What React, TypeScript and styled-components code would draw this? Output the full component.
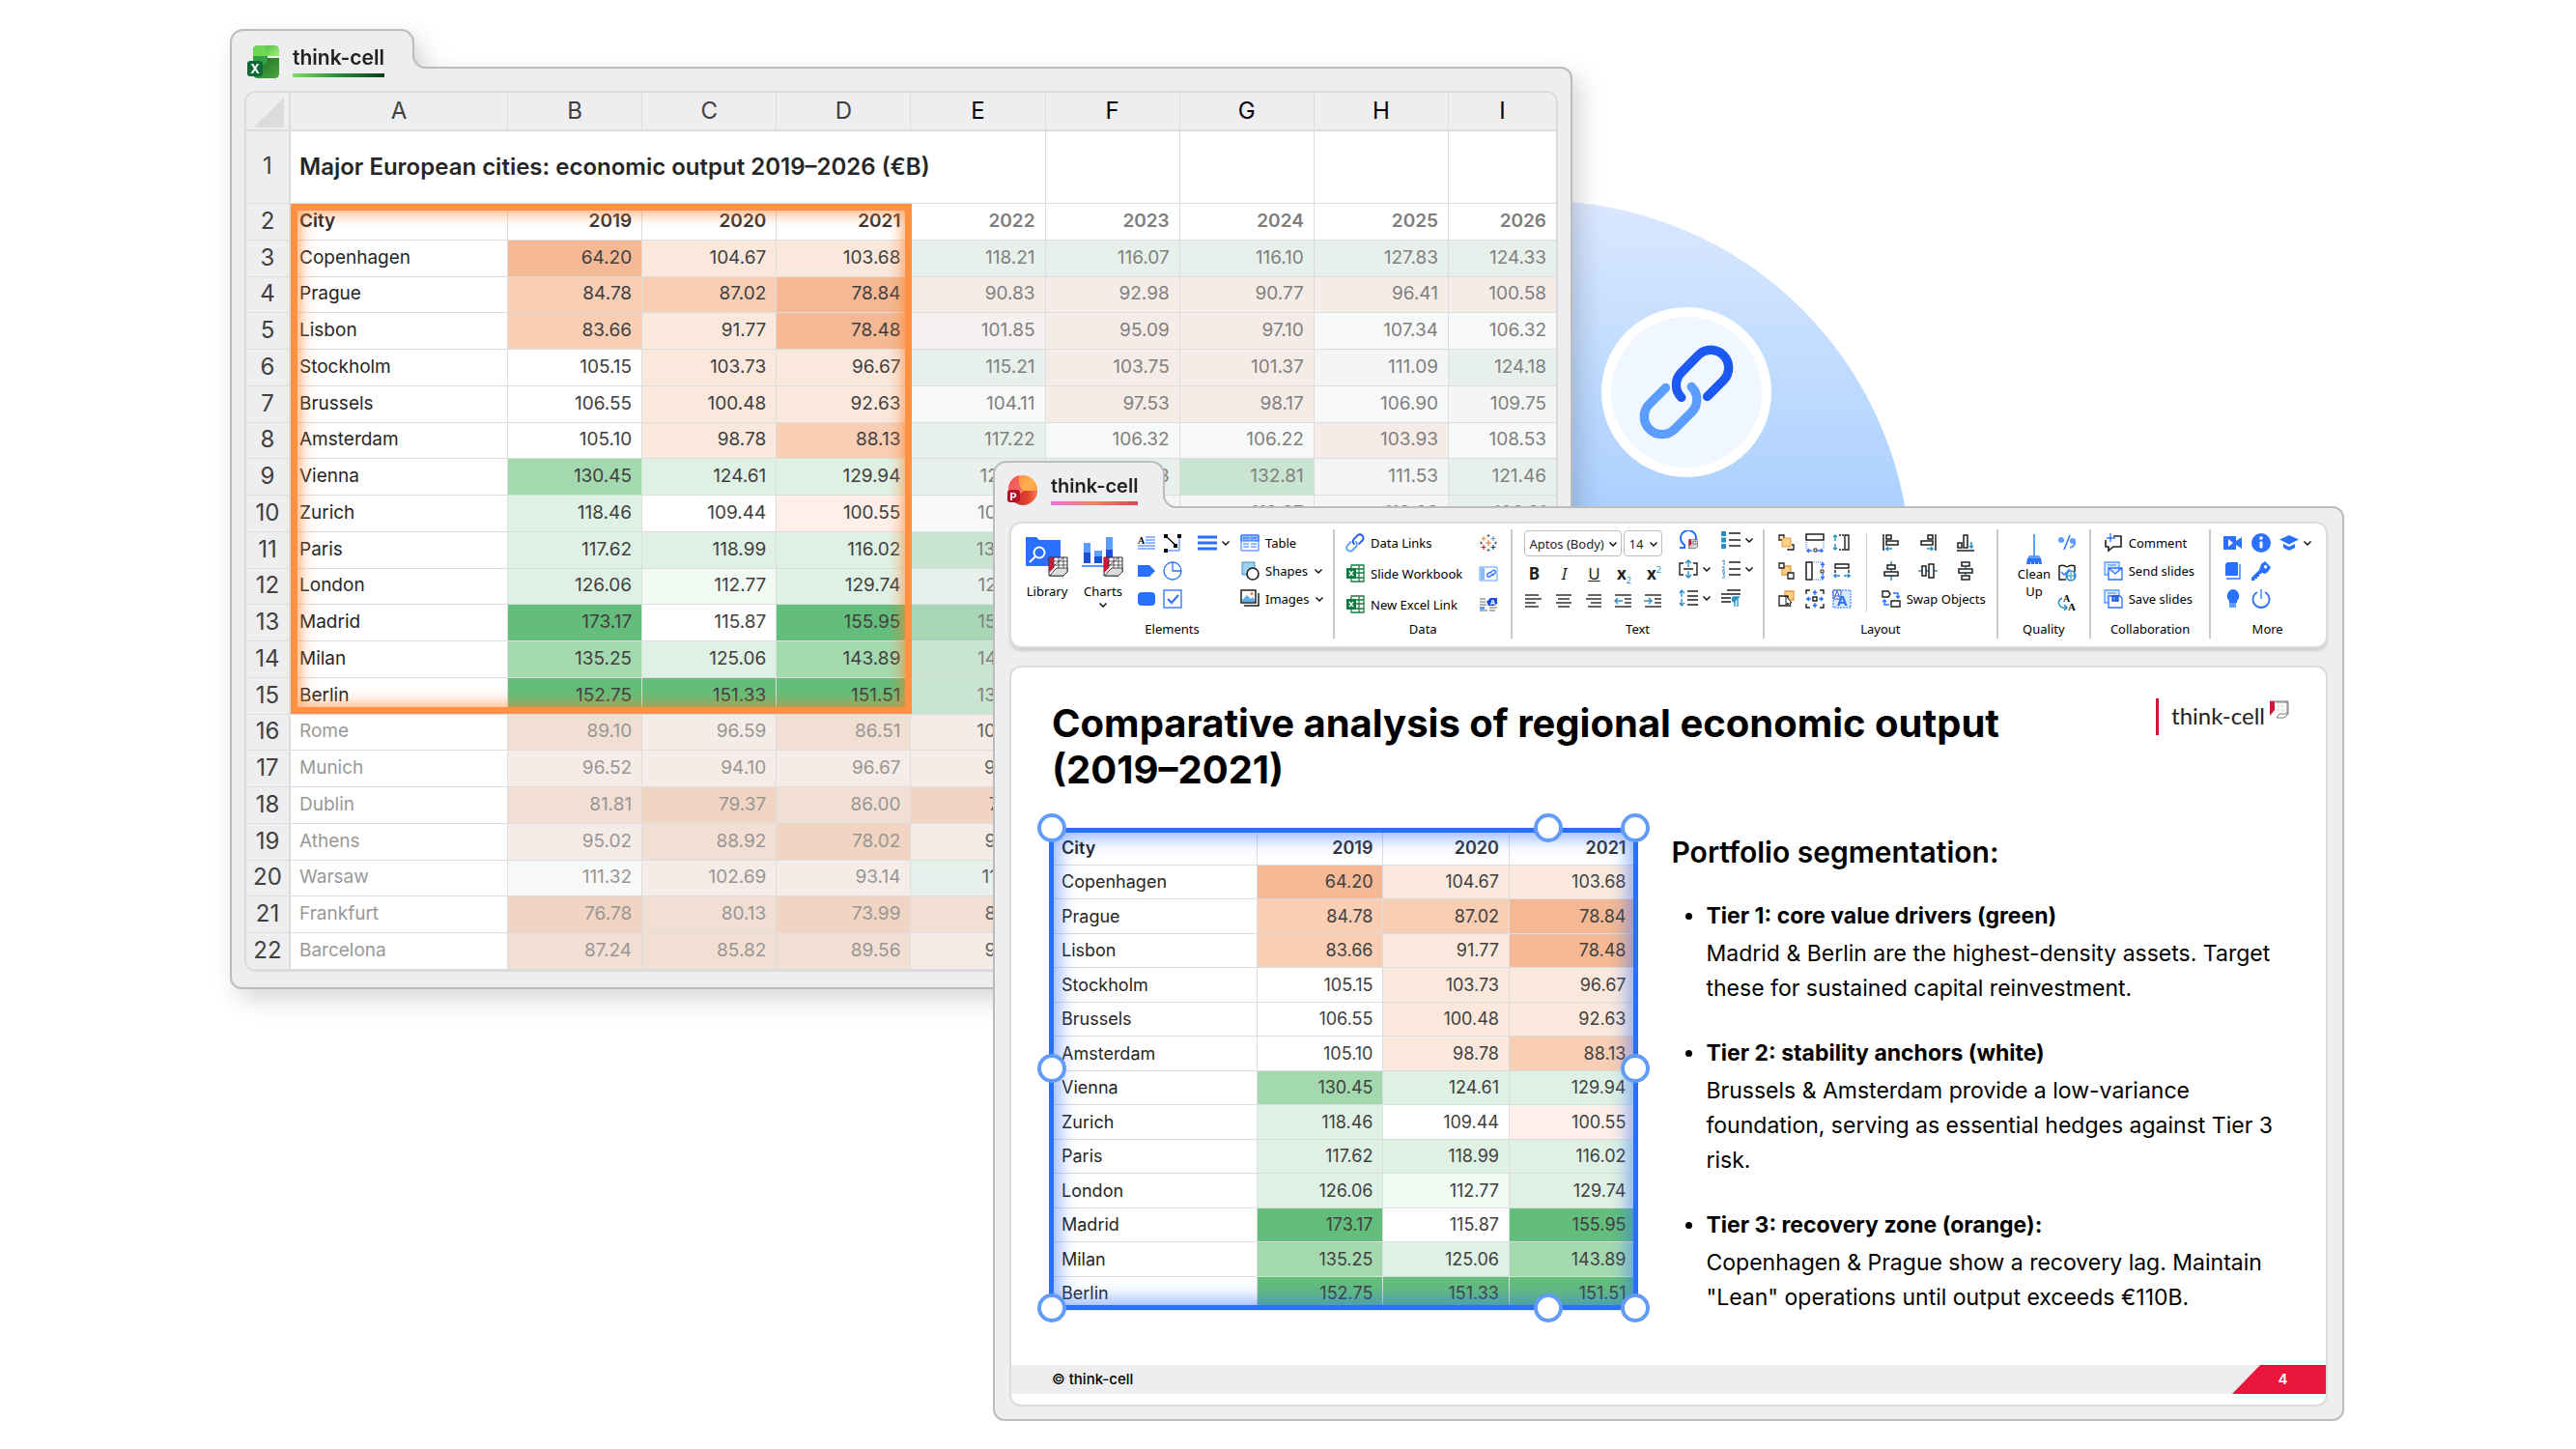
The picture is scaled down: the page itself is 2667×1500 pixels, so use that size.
import React from "react";
import type { ReactNode } from "react";
import styled, { createGlobalStyle } from "styled-components";

const GlobalStyle = createGlobalStyle`
  *, *::before, *::after { box-sizing: border-box; }
  body {
    margin: 0;
    background: #fff;
    color: #000;
    font-family: Inter, "Liberation Sans", sans-serif;
  }
  button {
    font: inherit;
    color: inherit;
    background: none;
    border: 0;
    padding: 0;
    cursor: pointer;
  }
`;

const BLUE = "#2970ff";
const DEEP = "#1d4ed8";
const SKY = "#5b9eff";
const TEAL = "#2a8fc4";
const INK = "#1f1f1f";

/* ---------- stage ---------- */

const Stage = styled.main`
  display: grid;
  grid-template-columns: 238fr 790fr 600fr 799fr 240fr;
  align-items: start;
  min-height: 100vh;
  padding-bottom: 30px;
`;

const Halo = styled.div`
  grid-area: 1 / 3 / 2 / 5;
  width: 766px;
  height: 766px;
  margin: 208px 0 0 184px;
  border-radius: 50%;
  background: linear-gradient(#dae8ff 0%, #c4ddff 20%, #abd0ff 42%, #9cc8ff 100%);
`;

const LinkBadge = styled.div`
  grid-area: 1 / 3 / 2 / 5;
  display: grid;
  place-items: center;
  width: 176px;
  height: 176px;
  margin: 318px 0 0 630px;
  border: 10px solid #fff;
  border-radius: 50%;
  background: #f0f7ff;
`;

/* ---------- window chrome ---------- */

const Window = styled.section<{ $place: string; $top: number; $shadow?: boolean }>`
  grid-area: ${(p) => p.$place};
  position: relative;
  min-width: 0;
  margin-top: ${(p) => p.$top}px;
  filter: ${(p) => (p.$shadow ? "drop-shadow(8px 10px 12px rgba(0, 0, 0, 0.16))" : "none")};
`;

const Tab = styled.header<{ $width: number; $height: number; $pad: string }>`
  position: relative;
  z-index: 1;
  width: ${(p) => p.$width}px;
  height: ${(p) => p.$height}px;
  margin-bottom: -2px;
  padding: ${(p) => p.$pad};
  border: 2px solid #bcbcbe;
  border-bottom: 0;
  border-radius: 14px 14px 0 0;
  background: #eeeef0;

  &::after {
    content: "";
    position: absolute;
    left: 100%;
    bottom: 0;
    width: 14px;
    height: 14px;
    border: solid #bcbcbe;
    border-width: 0 0 2px 2px;
    border-bottom-left-radius: 14px;
    box-shadow: -4px 4px 0 #eeeef0;
    clip-path: inset(0 0 0 0);
  }
`;

const TabContent = styled.div`
  display: flex;
  align-items: center;
  gap: 13px;
`;

const TabName = styled.h1<{ $size: number; $line: string }>`
  margin: 0;
  padding-bottom: 4px;
  border-bottom: 4px solid;
  border-image: linear-gradient(90deg, ${(p) => p.$line}) 1;
  color: #222;
  font-size: ${(p) => p.$size}px;
  line-height: 24px;
  font-weight: 600;
`;

const Frame = styled.div<{ $pad: string }>`
  padding: ${(p) => p.$pad};
  border: 2px solid #bcbcbe;
  border-radius: 0 12px 12px 12px;
  background: #eeeef0;
`;

/* ---------- sheets ---------- */

const tints: Record<string, string> = {
  w: "#ffffff",
  o0: "#feefe8", o1: "#fae8dc", o2: "#f8ceb4", o3: "#f4b994",
  g0: "#f1faf3", g1: "#dff1e4", g2: "#a4d9b0", g3: "#64be7b",
  fw: "#f7f8f8",
  fo0: "#f6f1f0", fo1: "#f5ebe7", fo2: "#f2dfd4", fo3: "#f1d4c1",
  fg0: "#f3f6f4", fg1: "#e7f0eb", fg2: "#c9e5d1", fg3: "#a9d6b6",
};

type Cell = [string, string];
type Row = { city: string; cells: Cell[] };

const parse = (line: string): Row => {
  const [city, rest] = line.split("|");
  return { city, cells: rest.trim().split(/\s+/).map((c) => c.split(":") as Cell) };
};

const active: Row[] = [
  "Copenhagen|64.20:o3 104.67:o1 103.68:o1 118.21:fg1 116.07:fg1 116.10:fg1 127.83:fg1 124.33:fg1",
  "Prague|84.78:o2 87.02:o2 78.84:o3 90.83:fo1 92.98:fo1 90.77:fo1 96.41:fo1 100.58:fo1",
  "Lisbon|83.66:o2 91.77:o1 78.48:o3 101.85:fo0 95.09:fo1 97.10:fo1 107.34:fw 106.32:fw",
  "Stockholm|105.15:w 103.73:o1 96.67:o1 115.21:fg1 103.75:fo1 101.37:fo1 111.09:fg0 124.18:fg1",
  "Brussels|106.55:w 100.48:o1 92.63:o1 104.11:fw 97.53:fo1 98.17:fo1 106.90:fw 109.75:fg0",
  "Amsterdam|105.10:w 98.78:o1 88.13:o2 117.22:fg1 106.32:fw 106.22:fw 103.93:fo1 108.53:fw",
  "Vienna|130.45:g2 124.61:g1 129.94:g1 127.42:fg1 128.13:fg1 132.81:fg2 111.53:fg0 121.46:fg1",
  "Zurich|118.46:g1 109.44:w 100.55:o0 108.25:fw 112.60:fg0 110.27:fg0 112.28:fg0 126.81:fg1",
  "Paris|117.62:g1 118.99:g1 116.02:g1 132.40:fg2",
  "London|126.06:g1 112.77:g0 129.74:g1 124.38:fg1",
  "Madrid|173.17:g3 115.87:w 155.95:g3 153.26:fg3",
  "Milan|135.25:g2 125.06:g1 143.89:g2 143.52:fg2",
  "Berlin|152.75:g3 151.33:g3 151.51:g3 139.04:fg2",
].map(parse);

const muted: Row[] = [
  "Rome|89.10:fo2 96.59:fo1 86.51:fo2 100.24:fo1",
  "Munich|96.52:fo1 94.10:fo1 96.67:fo1 93.48:fo1",
  "Dublin|81.81:fo2 79.37:fo3 86.00:fo2 77.52:fo3",
  "Athens|95.02:fo1 88.92:fo2 78.02:fo3 92.60:fo1",
  "Warsaw|111.32:fw 102.69:fo1 93.14:fo1 116.05:fg1",
  "Frankfurt|76.78:fo3 80.13:fo2 73.99:fo3 83.24:fo2",
  "Barcelona|87.24:fo2 85.82:fo2 89.56:fo2 94.06:fo1",
].map(parse);

const years = ["2019", "2020", "2021", "2022", "2023", "2024", "2025", "2026"];

const SheetPanel = styled.div`
  position: relative;
  overflow: hidden;
  border: 2px solid #dadadc;
  border-radius: 12px;
  background: #fff;
`;

const SheetTable = styled.table<{ $size: number }>`
  width: 100%;
  table-layout: fixed;
  border-collapse: separate;
  border-spacing: 0;
  font-size: ${(p) => p.$size}px;
  line-height: 24px;

  th, td { padding: 0 9px; border: solid #dcdddf; border-width: 0 1px 1px 0; font-weight: 400; }
  tr > :last-child { border-right: 0; }
`;

const GridTable = styled(SheetTable)`
  tbody tr { height: 38px; }
  tbody tr:nth-child(4n) { height: 37px; }
  tbody tr:first-child { height: 75px; }
  tbody th, tbody td { padding-bottom: 2px; }
`;

const CompactTable = styled(SheetTable)`
  tr { height: 35px; }
  tr:nth-child(even) { height: 36px; }
  th:first-child { padding-left: 10px; }
`;

const ColumnLetter = styled.th<{ $dark?: boolean }>`
  && { height: 40px; border-bottom-width: 2px; }
  background: #eeeef0;
  color: ${(p) => (p.$dark ? "#000" : "#404040")};
  font-size: 24px;
`;

const RowNumber = styled.th`
  && { padding-left: 0; padding-right: 0; border-right-width: 2px; }
  background: #eeeef0;
  color: #404040;
  font-size: 24px;
  text-align: center;
`;

const Corner = styled.td`
  && { padding: 5px 5px 2px; border-right-width: 2px; border-bottom-width: 2px; vertical-align: bottom; }
  background: #eeeef0;

  &::before {
    content: "";
    display: block;
    width: 32px;
    height: 31px;
    margin-left: auto;
    background: #dcdcde;
    clip-path: polygon(100% 0, 100% 100%, 0 100%);
  }
`;

const SheetTitle = styled.td`
  && { padding-bottom: 0; font-size: 24px; font-weight: 600; }
  color: #262626;
`;

const City = styled.th<{ $muted?: boolean; $bold?: boolean }>`
  text-align: left;
  color: ${(p) => (p.$muted ? "#989898" : "#262626")};
  && { font-weight: ${(p) => (p.$bold ? 600 : 400)}; }
`;

const Value = styled.td<{ $tint: string; $color?: string; $bold?: boolean }>`
  && { padding-right: 10px; font-weight: ${(p) => (p.$bold ? 600 : 400)}; }
  text-align: right;
  background: ${(p) => tints[p.$tint]};
  color: ${(p) => p.$color ?? "#404040"};
`;

const SelectionMark = styled.div`
  position: absolute;
  left: 46px;
  top: 115px;
  width: 643px;
  height: 528px;
  border: 7px solid #ff9142;
  box-shadow: inset 0 0 16px 2px rgba(255, 128, 40, 0.75);
  pointer-events: none;
`;

function DataRow({ row, index, dim }: { row: Row; index: number; dim?: boolean }) {
  const blanks = 8 - row.cells.length;
  return (
    <tr>
      <RowNumber scope="row">{index}</RowNumber>
      <City $muted={dim}>{row.city}</City>
      {row.cells.map(([text, tint], i) => (
        <Value key={i} $tint={tint} $color={i < 3 ? (dim ? "#989694" : "#404040") : dim ? "#606060" : "#808080"}>
          {text}
        </Value>
      ))}
      {Array.from({ length: blanks }, (_, i) => (
        <td key={`blank${i}`} />
      ))}
    </tr>
  );
}

function ExcelSheet() {
  return (
    <SheetPanel>
      <GridTable $size={19}>
        <colgroup>
          <col style={{ width: 46 }} />
          <col style={{ width: 225 }} />
          {years.slice(1).map((y) => <col key={y} />)}
          <col style={{ width: 111 }} />
        </colgroup>
        <thead>
          <tr>
            <Corner />
            {"ABCDEFGHI".split("").map((c, i) => (
              <ColumnLetter key={c} scope="col" $dark={i > 3}>{c}</ColumnLetter>
            ))}
          </tr>
        </thead>
        <tbody>
          <tr>
            <RowNumber scope="row">1</RowNumber>
            <SheetTitle colSpan={5}>Major European cities: economic output 2019–2026 (€B)</SheetTitle>
            <td /><td /><td /><td />
          </tr>
          <tr>
            <RowNumber scope="row">2</RowNumber>
            <City $bold>City</City>
            {years.map((y, i) => (
              <Value key={y} $tint="w" $bold $color={i > 2 ? "#7e7e7e" : "#333"}>{y}</Value>
            ))}
          </tr>
          {active.map((row, i) => <DataRow key={row.city} row={row} index={i + 3} />)}
          {muted.map((row, i) => <DataRow key={row.city} row={row} index={i + 16} dim />)}
        </tbody>
      </GridTable>
      <SelectionMark />
    </SheetPanel>
  );
}

/* ---------- drawings ---------- */

const Chain = ({ size }: { size: number }) => (
  <svg width={size} height={size} viewBox="167 528 302 302" fill="none" strokeWidth="28" strokeLinecap="round" aria-hidden="true">
    <path stroke="#1d58f2" d="M381 691L431 641A55 55 0 0 0 353 563L301 616A55 55 0 0 0 301 694" />
    <path stroke={SKY} d="M332 661A55 55 0 0 1 332 740L280 792A55 55 0 0 1 202 714L252 664" />
  </svg>
);

const ExcelLogo = () => (
  <svg width="34" height="36" viewBox="0 0 34 36" aria-hidden="true">
    <defs>
      <linearGradient id="xl-top" x1="0" y1="0" x2="1" y2="1">
        <stop offset="0" stopColor="#4fc24a" /><stop offset="1" stopColor="#a2ef70" />
      </linearGradient>
      <linearGradient id="xl-body" x1="0" y1="0" x2="1" y2="1">
        <stop offset="0" stopColor="#1c6a2c" /><stop offset="1" stopColor="#49a83a" />
      </linearGradient>
    </defs>
    <path d="M6 14h27v16q0 5-5 5H11q-5 0-5-5z" fill="url(#xl-body)" />
    <path d="M6 6q0-5 5-5h10v13q0 8-8 8H6z" fill="#34a043" />
    <path d="M6 6q0-5 5-5h8v11H6z" fill="#6fd754" />
    <path d="M19 1h9q5 0 5 5v6H19z" fill="url(#xl-top)" />
    <rect x="0" y="17" width="16" height="16" rx="3" fill="#0c6b37" />
    <text x="8" y="30" fill="#fff" fontSize="13" fontWeight="700" textAnchor="middle">X</text>
  </svg>
);

const PowerPointLogo = () => (
  <svg width="32" height="34" viewBox="0 0 32 34" aria-hidden="true">
    <defs>
      <linearGradient id="pp-right" x1="0" y1="0" x2="1" y2="1">
        <stop offset="0" stopColor="#ff7a45" /><stop offset="0.5" stopColor="#ffb24d" /><stop offset="1" stopColor="#ff8a4c" />
      </linearGradient>
      <linearGradient id="pp-left" x1="0" y1="0" x2="1" y2="1">
        <stop offset="0" stopColor="#ee4a3f" /><stop offset="1" stopColor="#ff9a8a" />
      </linearGradient>
      <linearGradient id="pp-base" x1="0" y1="0" x2="1" y2="0">
        <stop offset="0" stopColor="#c92a35" /><stop offset="0.6" stopColor="#e0402f" /><stop offset="1" stopColor="#f47a4e" />
      </linearGradient>
    </defs>
    <circle cx="16" cy="17" r="15" fill="url(#pp-right)" />
    <path d="M17 18h14A15 15 0 0 1 4 27z" fill="url(#pp-base)" />
    <path d="M12 2A15 15 0 0 0 2 22l15-4q-7-6-5-16z" fill="url(#pp-left)" />
    <path d="M12 2q-2 10 5 16l-9 2-6-1A15 15 0 0 1 12 2z" fill="#f0505a" fillOpacity="0.5" />
    <rect x="0" y="17" width="13" height="13" rx="3" fill="#b01326" />
    <text x="6" y="28" fill="#fff" fontSize="11" fontWeight="700" textAnchor="middle">P</text>
  </svg>
);

const CellMark = () => (
  <g>
    <path d="M1 1h19v15l-4 4H1z" fill="#fff" stroke="#222" />
    <path d="M1 1h5v11l-5 5z" fill="#d6123b" />
    <path d="M5 16l4-4h11v4l-4 4H2z" fill="#ddd" stroke="#222" strokeWidth=".8" />
    <path d="M6 1v11M11 1v11M16 1v11M6 5h14M6 9h14M6 10l10-9" stroke="#333" strokeWidth=".8" fill="none" />
  </g>
);

const LibraryArt = () => (
  <svg width="46" height="42" viewBox="0 0 46 42" aria-hidden="true">
    <path d="M1 1h11l3 3h22v27H1z" fill={BLUE} />
    <circle cx="15" cy="17" r="5.5" fill="none" stroke="#fff" strokeWidth="2" />
    <path d="M11 21l-6 6" stroke="#fff" strokeWidth="2" />
    <g transform="translate(24 21)"><CellMark /></g>
  </svg>
);

const ChartsArt = () => (
  <svg width="46" height="42" viewBox="0 0 46 42" aria-hidden="true">
    <path d="M3 7h7v10H3zM14 15h8v6h-8zM26 1h7v13h-7z" fill={SKY} />
    <path d="M3 17h7v11H3zM14 21h8v7h-8zM26 14h7v14h-7z" fill={DEEP} />
    <path d="M1 31h32" stroke={BLUE} strokeWidth="1.5" />
    <g transform="translate(23 21)"><CellMark /></g>
  </svg>
);

const BroomArt = () => (
  <svg width="18" height="33" viewBox="0 0 18 33" aria-hidden="true">
    <path d="M9 1v22" stroke={SKY} strokeWidth="2" />
    <path d="M4 23h10l2 3H2z" fill={SKY} />
    <path d="M2 26h14l1 6h-3l-1-3v3h-3v-3l-1 3H6l0-3-1 3H1z" fill={BLUE} />
  </svg>
);

const glyphs: Record<string, ReactNode> = {
  textbox: (
    <g>
      <path d="M9 4h10M9 7h10M9 10h10M1 13h18M1 16h18" stroke={BLUE} strokeWidth="1.2" />
      <text x="1" y="11" fontSize="10" fontWeight="800" fill="#000" fontFamily="Liberation Serif">A</text>
    </g>
  ),
  connector: (
    <g>
      <path d="M3 3l11 11M17 3v15H3" stroke={BLUE} strokeWidth="1" fill="none" />
      <path d="M3 3l10 9" stroke="#000" strokeWidth="1.2" />
      <path d="M1 1h4v4H1zM15 1h4v4h-4zM11 11h4v4h-4zM1 16h4v4H1z" fill="#000" />
    </g>
  ),
  pentagon: <path d="M1 4h12l6 6-6 6H1z" fill={BLUE} />,
  pie: (
    <g fill="none" stroke={BLUE} strokeWidth="1.3">
      <circle cx="10" cy="10" r="9" />
      <path d="M10 1v9h9" />
    </g>
  ),
  rounded: <rect x="1" y="3" width="18" height="14" rx="4" fill={BLUE} />,
  check: (
    <g fill="none" stroke={BLUE}>
      <rect x="1" y="1" width="18" height="18" strokeWidth="1.3" />
      <path d="M5 10l4 4 7-8" strokeWidth="2" />
    </g>
  ),
  lines: <path d="M0 4h20M0 10h20M0 16h20" stroke={BLUE} strokeWidth="3" />,
  table: (
    <g>
      <path d="M1 2h18v16H1z" fill="#fff" stroke={BLUE} />
      <path d="M1 2h18v6H1z" fill="#8fb8fb" stroke={BLUE} />
      <path d="M3 5h6M11 5h6M3 11h6M11 11h6M3 14h6M11 14h6" stroke={BLUE} strokeWidth="1.2" />
    </g>
  ),
  shapes: (
    <g>
      <path d="M2 1h13v13H2z" fill="#9fd0f0" stroke="#3f97cf" />
      <circle cx="13" cy="13" r="6" fill="#fff" stroke={INK} strokeWidth="1.6" />
    </g>
  ),
  images: (
    <g>
      <path d="M1 1h15v13H1z" fill="#fff" stroke={INK} strokeWidth="1.5" />
      <path d="M2 11l5-5 4 4 2-2 2 3v2H2z" fill="#5fb2e6" />
      <circle cx="12" cy="4.500" r="1.500" fill="#e8833a" />
      <path d="M19 4v13H4" fill="none" stroke={INK} strokeWidth="1.5" />
    </g>
  ),
  excel: (
    <g>
      <path d="M6 1h13v17H6zM11 5h8M11 9h8M11 14h8M14 1v17" fill="#fff" stroke="#15803d" strokeWidth="1.3" />
      <path d="M1 4h10v11H1z" fill="#107c41" />
      <path d="M4 7l4 5M8 7l-4 5" stroke="#fff" strokeWidth="1.3" />
    </g>
  ),
  spark: (
    <g strokeWidth="1.2">
      <path d="M10 7v6M7 10h6" stroke="#e8762d" />
      <path d="M5 3v5M2.500 5.500h5" stroke="#eb9a3c" />
      <path d="M15 3v5M12.500 5.500h5" stroke="#7199a6" />
      <path d="M5 12v5M2.500 14.500h5" stroke="#c72037" />
      <path d="M15 12v5M12.500 14.500h5" stroke="#1f447e" />
      <path d="M10 1v3M8.500 2.500h3M10 16v3M8.500 17.500h3M1 10h3M2.500 8.500v3M16 10h3M17.500 8.500v3" stroke="#5b6591" />
    </g>
  ),
  slideLink: (
    <g>
      <path d="M1 3h18v14H1z" fill="#fff" stroke={SKY} />
      <path d="M2 4h4v12H2z" fill="#8db9f7" />
      <g fill="none" stroke={BLUE} strokeWidth="1.400" strokeLinecap="round">
        <path d="M12 9l2.500-2.500a1.800 1.800 0 0 1 2.500 2.500L14.500 11.500" />
        <path d="M14 10.500L11.500 13a1.800 1.800 0 0 1-2.500-2.500L11 8.500" />
      </g>
    </g>
  ),
  tagText: (
    <g>
      <path d="M1 4h6M1 7h6M1 10h7M1 16h8M11 13h8M11 16h6" stroke="#9a9a9a" strokeWidth="1.3" />
      <path d="M1 12h5v3H1z" fill={SKY} />
      <path d="M8 7l4-4h7v6l-3 2h-6z" fill={DEEP} />
      <text x="12" y="10" fontSize="7" fontWeight="700" fill="#fff">A</text>
    </g>
  ),
  left: <path d="M1 4h14M1 8h17M1 12h11M1 16h14" stroke="#333" strokeWidth="1.400" />,
  center: <path d="M2 4h16M4 8h12M2 12h16M4 16h12" stroke="#333" strokeWidth="1.400" />,
  right: <path d="M4 4h14M2 8h16M7 12h11M4 16h14" stroke="#333" strokeWidth="1.400" />,
  outdent: (
    <g strokeWidth="1.400" fill="none">
      <path d="M1 4h17M11 8h7M11 12h7M1 16h17" stroke="#333" />
      <path d="M9 10H1M4 7l-3 3 3 3" stroke={TEAL} />
    </g>
  ),
  indent: (
    <g strokeWidth="1.400" fill="none">
      <path d="M1 4h17M11 8h7M11 12h7M1 16h17" stroke="#333" />
      <path d="M0 10h8M5 7l3 3-3 3" stroke={TEAL} />
    </g>
  ),
  omega: (
    <g>
      <path d="M1 18h5v-3A8 8 0 1 1 14 15" fill="none" stroke={BLUE} strokeWidth="2" />
      <g transform="translate(10 9) scale(.48)"><CellMark /></g>
    </g>
  ),
  rowFit: (
    <g fill="none" strokeWidth="1.400">
      <path d="M5 4H1v12h4M15 4h4v12h-4M5 10h10" stroke={INK} />
      <path d="M10 8V1M7 4l3-3 3 3M10 12v7M7 16l3 3 3-3" stroke={TEAL} />
    </g>
  ),
  spacing: (
    <g fill="none" strokeWidth="1.400">
      <path d="M9 3h11M9 8h11M9 12h11M9 17h11" stroke={INK} />
      <path d="M3 9V2M1 5l2-3 3 3M3 11v7M1 15l2 3 3-3" stroke={TEAL} />
    </g>
  ),
  bullets: (
    <g>
      <path d="M0 1h5v5H0zM0 7.500h5v5H0zM0 14h5v5H0z" fill={TEAL} />
      <path d="M8 3h12M8 10h12M8 16h12" stroke={INK} strokeWidth="1.400" />
    </g>
  ),
  numbers: (
    <g>
      <path d="M8 3h12M8 10h12M8 16h12" stroke={INK} strokeWidth="1.400" />
      <path d="M1 2l2-1v5M1 8h2v2l-2 2h3M1 14h3l-2 2q3 0 1 3H1" fill="none" stroke={TEAL} />
    </g>
  ),
  paragraph: (
    <g>
      <path d="M6 2h14M0 6h20M0 10h10M0 14h10" stroke={INK} strokeWidth="1.400" />
      <path d="M14 19V9M17 19V9M19 9h-5a2.500 2.500 0 0 0 0 5" fill={TEAL} stroke={TEAL} strokeWidth="1.400" />
    </g>
  ),
  front: (
    <g>
      <path d="M6 5V2H1v5h3" fill="none" stroke={INK} strokeWidth="1.300" />
      <path d="M4 5h9v9H4z" fill="#ffd083" stroke="#e59a3a" />
      <path d="M10 16v1h6v-5h-2" fill="none" stroke={INK} strokeWidth="1.300" />
    </g>
  ),
  group: (
    <g strokeWidth="1.300">
      <path d="M4 5h9v9H4z" fill="#ffd083" stroke="#e59a3a" />
      <path d="M1 2h5v5H1zM10 12h6v6h-6z" fill="#fff" stroke={INK} />
    </g>
  ),
  pick: (
    <g strokeWidth="1.300">
      <path d="M7 2h9v9H7z" fill="#ffd083" stroke="#e59a3a" />
      <path d="M1 7h9v10H1z" fill="#fff" stroke={INK} />
      <path d="M8 7v9l2-2 2 4 1-1-1-3h2z" fill="#fff" stroke={INK} strokeWidth="1" />
    </g>
  ),
  sameWidth: (
    <g fill="none">
      <path d="M1 1h18v6H1z" stroke={INK} strokeWidth="1.500" />
      <path d="M1 9v8M19 9v8" stroke={BLUE} strokeDasharray="1 1" />
      <path d="M7 18H2l2-2M2 18l2 2M13 18h5l-2-2M18 18l-2 2" stroke={BLUE} strokeWidth="1.300" />
      <path d="M9 16h3v3H9z" stroke={INK} />
    </g>
  ),
  sameHeight: (
    <g fill="none">
      <path d="M1 1h6v18H1z" stroke={INK} strokeWidth="1.500" />
      <path d="M9 1h9M9 19h9" stroke={BLUE} strokeDasharray="1 1" />
      <path d="M18 7V2l-2 2M18 2l2 2M18 13v5l-2-2M18 18l2-2" stroke={BLUE} strokeWidth="1.300" />
      <path d="M16 9h3v3h-3z" stroke={INK} />
    </g>
  ),
  stretchV: (
    <g fill="none" strokeWidth="1.400">
      <path d="M13 2h4v15h-4z" stroke={INK} />
      <path d="M7 2h5M7 17h5" stroke={INK} strokeDasharray="2 1" />
      <path d="M3 8V2M1 4l2-2 2 2M3 11v6M1 15l2 2 2-2" stroke={TEAL} />
    </g>
  ),
  stretchH: (
    <g fill="none" strokeWidth="1.400">
      <path d="M3 3h14v4H3zM3 9v3M17 9v3" stroke={INK} />
      <path d="M8 15H2l2-2M2 15l2 2M12 15h6l-2-2M18 15l-2 2" stroke={TEAL} />
    </g>
  ),
  grow: (
    <g fill="none" strokeWidth="1.400">
      <path d="M1 5V1h4M15 1h4v4M1 15v4h4M15 19h4v-4M8 8h4v4H8z" stroke={INK} />
      <path d="M10 6V2l-2 2M10 2l2 2M10 14v4l-2-2M10 18l2-2M6 10H2l2-2M2 10l2 2M14 10h4l-2-2M18 10l-2 2" stroke={BLUE} />
    </g>
  ),
  fontMatch: (
    <g>
      <path d="M1 1h18v18H1z" fill="#dbe9ff" stroke={BLUE} strokeDasharray="2 1" />
      <text x="5" y="17" fontSize="15" fontWeight="700" fill={BLUE}>A</text>
      <path d="M1 1h8v9H1z" fill="#fff" stroke={DEEP} />
      <path d="M2 9l3-7 3 7M3 7h4" fill="none" stroke={DEEP} />
    </g>
  ),
  alignL: (
    <g fill="none" strokeWidth="1.500">
      <path d="M2 1v17M5 2h5v4H5zM5 8h12v4H5z" stroke={INK} />
      <path d="M11 16H5l2-2M5 16l2 2" stroke={TEAL} />
    </g>
  ),
  alignR: (
    <g fill="none" strokeWidth="1.500">
      <path d="M18 1v17M10 2h5v4h-5zM3 8h12v4H3z" stroke={INK} />
      <path d="M9 16h6l-2-2M15 16l-2 2" stroke={TEAL} />
    </g>
  ),
  alignB: (
    <g fill="none" strokeWidth="1.500">
      <path d="M1 18h18M2 10h4v5H2zM8 2h4v13H8z" stroke={INK} />
      <path d="M16 9v6l-2-2M16 15l2-2" stroke={TEAL} />
    </g>
  ),
  centerV: (
    <g fill="#fff" strokeWidth="1.500">
      <path d="M10 0v20" stroke={TEAL} />
      <path d="M6 4h8v4H6zM3 11h14v4H3z" stroke={INK} />
    </g>
  ),
  middleH: (
    <g fill="#fff" strokeWidth="1.500">
      <path d="M0 10h20" stroke={TEAL} />
      <path d="M4 5h4v10H4zM11 3h5v14h-5z" stroke={INK} />
    </g>
  ),
  distribute: (
    <g fill="#fff" strokeWidth="1.500">
      <path d="M10 4v12" stroke={TEAL} />
      <path d="M6 1h8v4H6zM3 8h14v4H3zM6 15h8v4H6z" stroke={INK} />
    </g>
  ),
  swap: (
    <g fill="none" strokeWidth="1.400">
      <path d="M1 2h6l2 3-2 3H1zM10 12h9v6h-9z" stroke={INK} />
      <path d="M12 4h5v5M15 7l2 2 2-2M8 16H3v-5M1 13l2-2 2 2" stroke={BLUE} />
    </g>
  ),
  proof: (
    <g>
      <circle cx="4" cy="7" r="3" fill={SKY} />
      <path d="M13 2L7 17" stroke={BLUE} strokeWidth="1.500" />
      <circle cx="16" cy="8" r="3" fill={SKY} />
      <path d="M18 8q1 5-5 7" stroke={SKY} strokeWidth="2" fill="none" />
    </g>
  ),
  dictionary: (
    <g fill="none">
      <path d="M10 4Q6 1 2 3v14h7M10 4q4-3 8-1v6" stroke={INK} strokeWidth="1.500" />
      <path d="M4 9l3 3 6-6" stroke={BLUE} strokeWidth="1.400" />
      <circle cx="14" cy="13" r="5" fill="#fff" stroke={TEAL} strokeWidth="1.400" />
      <path d="M9 13h10M14 8v10M11 9q-1 4 0 8M17 9q1 4 0 8" stroke={TEAL} />
    </g>
  ),
  replace: (
    <g>
      <text x="6" y="9" fontSize="10" fontWeight="700" fill="#000" fontFamily="Liberation Serif">A</text>
      <text x="11" y="18" fontSize="11" fontWeight="700" fill="#000" fontFamily="Liberation Serif">A</text>
      <path d="M5 5q-5 3-3 7 2 4 7 3M7 12l3 3-3 3" fill="none" stroke={TEAL} strokeWidth="1.500" />
    </g>
  ),
  comment: (
    <g fill="none" strokeWidth="1.600">
      <path d="M10 3h8v11h-8l-5 4v-4H2V7" stroke={INK} />
      <path d="M7 0v9M3 5h9" stroke={BLUE} strokeWidth="1.300" />
    </g>
  ),
  send: (
    <g strokeWidth="1.300">
      <path d="M1 1h15v13H1z" fill="#dbe9ff" stroke={SKY} />
      <path d="M4 4h9" stroke={SKY} />
      <path d="M5 7h14v12H5zM5 7l7 6 7-6" fill="#fff" stroke={BLUE} />
    </g>
  ),
  save: (
    <g strokeWidth="1.300">
      <path d="M1 1h15v13H1z" fill="#dbe9ff" stroke={SKY} />
      <path d="M4 4h9" stroke={SKY} />
      <path d="M5 7h12l2 2v10H5z" fill="#fff" stroke={BLUE} />
      <path d="M9 7h6v5H9zM13 8v3" fill={SKY} stroke={DEEP} />
    </g>
  ),
  video: <path fillRule="evenodd" d="M0 3h13v5l6-4v12l-6-4v5H0zM5 6v8l5-4z" fill={BLUE} />,
  info: (
    <g>
      <circle cx="10" cy="10" r="10" fill={BLUE} />
      <path d="M9 9h2v6H9z" fill="#fff" stroke="#fff" />
      <circle cx="10" cy="5" r="1.800" fill="#fff" />
    </g>
  ),
  academy: (
    <g fill={BLUE}>
      <path d="M10 2l10 4.500-10 5L0 6.500z" />
      <path d="M4 11l6 3 6-3v4l-6 3-6-3z" />
    </g>
  ),
  book: (
    <g>
      <path d="M4 1h11v14H2V3z" fill={BLUE} />
      <path d="M17 3v15H3" fill="none" stroke={BLUE} strokeWidth="1.300" />
    </g>
  ),
  key: <path fillRule="evenodd" d="M10 3l4-3 6 6-3 5-3 2-3-1-3 2v2H6v2H4l-1 2H0v-3l8-8zM14.500 4a1.700 1.700 0 1 0 .1 0z" fill={BLUE} />,
  bulb: (
    <g>
      <path d="M10 0a7 7 0 0 1 4 12v2H6v-2a7 7 0 0 1 4-12z" fill={BLUE} />
      <path d="M6 14h7v5H6z" fill={SKY} />
    </g>
  ),
  power: (
    <g fill="none" strokeWidth="1.800">
      <path d="M6 3a8.500 8.500 0 1 0 8 0" stroke={BLUE} />
      <path d="M10 0v10" stroke={SKY} />
    </g>
  ),
};

const Chevron = () => (
  <svg width="10" height="10" viewBox="0 0 10 10" fill="none" aria-hidden="true">
    <path d="M1.500 3.500L5 7l3.500-3.500" stroke="#111" strokeWidth="1.500" />
  </svg>
);

const Glyph = ({ name }: { name: string }) =>
  name === "chain" ? (
    <Chain size={20} />
  ) : (
    <svg width="20" height="20" viewBox="0 0 20 20" fill="none" aria-hidden="true">
      {glyphs[name]}
    </svg>
  );

/* ---------- ribbon ---------- */

const Ribbon = styled.nav`
  display: grid;
  grid-template-columns: 336fr 185fr 261fr 243fr 96fr 125fr 119fr;
  padding: 6px 0 8px;
  border: 2px solid #dcdcde;
  border-radius: 12px;
  background: #fff;
  box-shadow: 0 3px 3px #cfcfd2;
  font-family: "Noto Sans", "Open Sans", sans-serif;
  font-size: 13px;
  line-height: 20px;
`;

const Group = styled.section`
  display: flex;
  flex-direction: column;
  justify-content: space-between;
  min-width: 0;
  height: 113px;
  border-right: 2px solid #cbcbcd;

  &:last-child { border-right-color: transparent; }
`;

const GroupTools = styled.div<{ $start: number; $end?: number; $top?: number }>`
  padding: ${(p) => p.$top ?? 4}px ${(p) => p.$end ?? 0}px 0 ${(p) => p.$start}px;
`;

const GroupName = styled.h2`
  margin: 0;
  font-size: inherit;
  font-weight: 400;
  text-align: center;
`;

const Tools = styled.div<{ $gap: number; $spread?: boolean }>`
  display: flex;
  align-items: flex-start;
  gap: ${(p) => p.$gap}px;
  justify-content: ${(p) => (p.$spread ? "space-between" : "flex-start")};
`;

const IconGrid = styled.div<{ $cols?: number; $gap?: number; $rowGap?: number }>`
  display: grid;
  grid-template-columns: repeat(${(p) => p.$cols ?? 1}, auto);
  justify-content: start;
  gap: ${(p) => p.$rowGap ?? 9}px ${(p) => p.$gap ?? 8}px;
`;

const ToolButton = styled.button<{ $span?: number; $close?: boolean }>`
  display: flex;
  align-items: center;
  gap: ${(p) => (p.$close ? 4 : 6)}px;
  height: 20px;
  white-space: nowrap;
  grid-column: span ${(p) => p.$span ?? 1};

  svg { flex: none; display: block; }
`;

const TallButton = styled.button<{ $width: number; $tight?: boolean }>`
  display: flex;
  flex-direction: column;
  align-items: center;
  gap: ${(p) => (p.$tight ? 0 : 6)}px;
  width: ${(p) => p.$width}px;
  padding-top: ${(p) => (p.$tight ? 0 : 3)}px;
  line-height: 18px;

  svg { display: block; flex: none; }
  svg:last-child:not(:first-child) { margin-top: -6px; }
`;

const LetterButton = styled.button`
  width: 20px;
  height: 20px;
  font-size: 17px;
  line-height: 20px;
  color: #1f1f1f;

  sub, sup { color: ${TEAL}; font-size: 9px; line-height: 0; font-weight: 400; }
`;

const SubDivider = styled.span`
  width: 1px;
  height: 81px;
  margin: 0 7px;
  background: #cbcbcd;
`;

const SelectRow = styled.div`
  display: flex;
  gap: 2px;
`;

const SelectBox = styled.span<{ $width: number }>`
  position: relative;
  display: flex;
  width: ${(p) => p.$width}px;
  height: 27px;

  select {
    appearance: none;
    width: 100%;
    height: 27px;
    padding: 0 5px 0 4px;
    border: 1px solid #bdbdbf;
    border-radius: 4px;
    background: #fff;
    color: #222;
    font: inherit;
  }
  svg { position: absolute; right: 4px; top: 9px; pointer-events: none; }
`;

const Tool = ({ name, label, text, menu, span }: { name: string; label: string; text?: boolean; menu?: boolean; span?: number }) => (
  <ToolButton type="button" aria-label={label} $span={span} $close={!text}>
    <Glyph name={name} />
    {text && <span>{label}</span>}
    {menu && <Chevron />}
  </ToolButton>
);

function RibbonBar() {
  return (
    <Ribbon aria-label="Ribbon">
      <Group>
        <GroupTools $start={14}>
          <Tools $gap={12}>
            <TallButton type="button" $width={46}><LibraryArt /><span>Library</span></TallButton>
            <TallButton type="button" $width={46}><ChartsArt /><span>Charts</span><Chevron /></TallButton>
            <Tools $gap={16}>
              <IconGrid $cols={2} $gap={7}>
                <Tool name="textbox" label="Text box" />
                <Tool name="connector" label="Connector" />
                <Tool name="pentagon" label="Pentagon" />
                <Tool name="pie" label="Harvey ball" />
                <Tool name="rounded" label="Rounded box" />
                <Tool name="check" label="Checkbox" />
              </IconGrid>
              <Tools $gap={10}>
                <Tool name="lines" label="Rows" menu />
                <IconGrid>
                  <Tool name="table" label="Table" text />
                  <Tool name="shapes" label="Shapes" text menu />
                  <Tool name="images" label="Images" text menu />
                </IconGrid>
              </Tools>
            </Tools>
          </Tools>
        </GroupTools>
        <GroupName>Elements</GroupName>
      </Group>
      <Group>
        <GroupTools $start={11} $end={13}>
          <Tools $gap={8} $spread>
            <IconGrid $rowGap={12}>
              <Tool name="chain" label="Data Links" text />
              <Tool name="excel" label="Slide Workbook" text />
              <Tool name="excel" label="New Excel Link" text />
            </IconGrid>
            <IconGrid $rowGap={12}>
              <Tool name="spark" label="Tableau" />
              <Tool name="slideLink" label="Link slide" />
              <Tool name="tagText" label="Tag text" />
            </IconGrid>
          </Tools>
        </GroupTools>
        <GroupName>Data</GroupName>
      </Group>
      <Group>
        <GroupTools $start={12} $top={1}>
          <Tools $gap={16}>
            <IconGrid $rowGap={8}>
              <SelectRow>
                <SelectBox $width={101}>
                  <select aria-label="Font"><option>Aptos (Body)</option></select>
                  <Chevron />
                </SelectBox>
                <SelectBox $width={40}>
                  <select aria-label="Font size"><option>14</option></select>
                  <Chevron />
                </SelectBox>
              </SelectRow>
              <Tools $gap={11}>
                <LetterButton type="button"><b>B</b></LetterButton>
                <LetterButton type="button"><i>I</i></LetterButton>
                <LetterButton type="button"><u>U</u></LetterButton>
                <LetterButton type="button"><b>x</b><sub>2</sub></LetterButton>
                <LetterButton type="button"><b>x</b><sup>2</sup></LetterButton>
              </Tools>
              <Tools $gap={11}>
                <Tool name="left" label="Align left" />
                <Tool name="center" label="Align center" />
                <Tool name="right" label="Align right" />
                <Tool name="outdent" label="Decrease indent" />
                <Tool name="indent" label="Increase indent" />
              </Tools>
            </IconGrid>
            <IconGrid $cols={2} $gap={10} $rowGap={10}>
              <Tool name="omega" label="Symbol" />
              <Tool name="bullets" label="Bullets" menu />
              <Tool name="rowFit" label="Fit" menu />
              <Tool name="numbers" label="Numbering" menu />
              <Tool name="spacing" label="Line spacing" menu />
              <Tool name="paragraph" label="Paragraph" />
            </IconGrid>
          </Tools>
        </GroupTools>
        <GroupName>Text</GroupName>
      </Group>
      <Group>
        <GroupTools $start={14}>
          <Tools $gap={8}>
            <IconGrid $cols={3}>
              <Tool name="front" label="Bring to front" />
              <Tool name="sameWidth" label="Same width" />
              <Tool name="stretchV" label="Stretch vertically" />
              <Tool name="group" label="Group" />
              <Tool name="sameHeight" label="Same height" />
              <Tool name="stretchH" label="Stretch horizontally" />
              <Tool name="pick" label="Select" />
              <Tool name="grow" label="Grow" />
              <Tool name="fontMatch" label="Match font" />
            </IconGrid>
            <SubDivider />
            <IconGrid $cols={3}>
              <Tool name="alignL" label="Align left edges" />
              <Tool name="alignR" label="Align right edges" />
              <Tool name="alignB" label="Align bottom edges" />
              <Tool name="centerV" label="Center" />
              <Tool name="middleH" label="Middle" />
              <Tool name="distribute" label="Distribute" />
              <Tool name="swap" label="Swap Objects" text span={3} />
            </IconGrid>
          </Tools>
        </GroupTools>
        <GroupName>Layout</GroupName>
      </Group>
      <Group>
        <GroupTools $start={19}>
          <Tools $gap={6}>
            <TallButton type="button" $width={36} $tight><BroomArt /><span>Clean Up</span></TallButton>
            <IconGrid $rowGap={11}>
              <Tool name="proof" label="Proofing" />
              <Tool name="dictionary" label="Language" />
              <Tool name="replace" label="Replace fonts" />
            </IconGrid>
          </Tools>
        </GroupTools>
        <GroupName>Quality</GroupName>
      </Group>
      <Group>
        <GroupTools $start={13}>
          <IconGrid>
            <Tool name="comment" label="Comment" text />
            <Tool name="send" label="Send slides" text />
            <Tool name="save" label="Save slides" text />
          </IconGrid>
        </GroupTools>
        <GroupName>Collaboration</GroupName>
      </Group>
      <Group>
        <GroupTools $start={13}>
          <IconGrid $cols={3} $gap={9}>
            <Tool name="video" label="Video" />
            <Tool name="info" label="Info" />
            <Tool name="academy" label="Academy" menu />
            <Tool name="book" label="Manual" />
            <Tool name="key" label="License" />
            <span />
            <Tool name="bulb" label="Tips" />
            <Tool name="power" label="Deactivate" />
          </IconGrid>
        </GroupTools>
        <GroupName>More</GroupName>
      </Group>
    </Ribbon>
  );
}

/* ---------- slide ---------- */

const Slide = styled.article`
  margin-top: 18px;
  padding-bottom: 11px;
  border: 2px solid #dcdcde;
  border-radius: 12px;
  background: #fff;
`;

const SlideHead = styled.div`
  display: flex;
  justify-content: space-between;
  padding: 32px 38px 0 42px;
`;

const SlideTitle = styled.h2`
  max-width: 1040px;
  margin: 0;
  padding-top: 2px;
  font-size: 40px;
  line-height: 48px;
  font-weight: 700;
`;

const Brand = styled.div`
  display: flex;
  align-items: flex-start;
  gap: 4px;
  height: 38px;
  padding-left: 13px;
  border-left: 3px solid #d6123b;
  color: #222;
  font-family: Lato, "Open Sans", sans-serif;
  font-size: 24px;
  line-height: 36px;
`;

const SlideBody = styled.div`
  display: grid;
  grid-template-columns: 604fr 641fr;
  gap: 37px;
  align-items: start;
  padding: 40px 36px 52px 42px;
`;

const Linked = styled.div`
  position: relative;
`;

const LinkedMark = styled.div`
  position: absolute;
  inset: -4px -3px 1px -3px;
  border: 5px solid ${BLUE};
  box-shadow: inset 0 0 20px 4px rgba(41, 112, 255, 0.6);
  pointer-events: none;
`;

const Handle = styled.span<{ $x: string; $y: string }>`
  position: absolute;
  left: ${(p) => p.$x};
  top: ${(p) => p.$y};
  width: 30px;
  height: 30px;
  margin: -15px 0 0 -15px;
  border: 4px solid #629cf6;
  border-radius: 50%;
  background: #fff;
`;

const HandleLayer = styled.div`
  position: absolute;
  inset: -4px 0 3px 0;
`;

const Notes = styled.section`
  padding-top: 3px;
  font-size: 23px;
  line-height: 36px;

  h3 { margin: 0 0 30px; font-size: 30px; line-height: 36px; font-weight: 600; }
  h4 { margin: 0 0 3px; font-size: 23px; line-height: 36px; font-weight: 700; }
  p { margin: 0; }
  ul { display: grid; gap: 31px; margin: 0; padding: 0 0 0 36px; }
  li::marker { font-size: 22px; }
`;

const SlideFoot = styled.footer`
  display: flex;
  justify-content: space-between;
  background: #eeeef0;
  padding-left: 42px;
  font-size: 15px;
  line-height: 30px;
  font-weight: 500;
`;

const PageNumber = styled.span`
  width: 97px;
  padding-left: 8px;
  background: #e9153b;
  clip-path: polygon(30% 0, 100% 0, 100% 100%, 0 100%);
  color: #fff;
  font-weight: 600;
  text-align: center;
`;

const tiers = [
  ["Tier 1: core value drivers (green)", "Madrid & Berlin are the highest-density assets. Target these for sustained capital reinvestment."],
  ["Tier 2: stability anchors (white)", "Brussels & Amsterdam provide a low-variance foundation, serving as essential hedges against Tier 3 risk."],
  ["Tier 3: recovery zone (orange):", "Copenhagen & Prague show a recovery lag. Maintain \"Lean\" operations until output exceeds €110B."],
];

const handles = [
  ["0%", "0%"], ["85%", "0%"], ["100%", "0%"],
  ["0%", "50%"], ["100%", "50%"],
  ["0%", "100%"], ["85%", "100%"], ["100%", "100%"],
];

function SlideView() {
  return (
    <Slide>
      <SlideHead>
        <SlideTitle>Comparative analysis of regional economic output (2019–2021)</SlideTitle>
        <Brand>
          think-cell
          <svg width="21" height="21" viewBox="0 0 21 21" aria-hidden="true">
            <path d="M1 3h19v13l-4 4H8l3-4h8V4H7" fill="none" stroke="#777" />
            <path d="M1 3h5v9l-5 6z" fill="#d6123b" />
            <path d="M10 4v11M14 4v11M7 8h12M7 12h12" stroke="#ddd" strokeWidth=".8" />
          </svg>
        </Brand>
      </SlideHead>
      <SlideBody>
        <Linked>
          <CompactTable $size={18}>
            <colgroup>
              <col style={{ width: 213 }} />
              <col /><col /><col />
            </colgroup>
            <thead>
              <tr>
                <City $bold scope="col">City</City>
                {years.slice(0, 3).map((y) => (
                  <Value as="th" key={y} $tint="w" $bold $color="#333">{y}</Value>
                ))}
              </tr>
            </thead>
            <tbody>
              {active.map((row) => (
                <tr key={row.city}>
                  <City scope="row">{row.city}</City>
                  {row.cells.slice(0, 3).map(([text, tint], i) => <Value key={i} $tint={tint}>{text}</Value>)}
                </tr>
              ))}
            </tbody>
          </CompactTable>
          <LinkedMark />
          <HandleLayer>
            {handles.map(([x, y]) => <Handle key={x + y} $x={x} $y={y} />)}
          </HandleLayer>
        </Linked>
        <Notes>
          <h3>Portfolio segmentation:</h3>
          <ul>
            {tiers.map(([name, body]) => (
              <li key={name}>
                <h4>{name}</h4>
                <p>{body}</p>
              </li>
            ))}
          </ul>
        </Notes>
      </SlideBody>
      <SlideFoot>
        <span>© think-cell</span>
        <PageNumber>4</PageNumber>
      </SlideFoot>
    </Slide>
  );
}

export default function App() {
  return (
    <>
      <GlobalStyle />
      <Stage>
        <Halo />
        <Window $place="1 / 2 / 2 / 4" $top={30} $shadow>
          <Tab $width={191} $height={41} $pad="14px 0 0 16px">
            <TabContent>
              <ExcelLogo />
              <TabName $size={21} $line="#7fde6b, #2d8a3c, #0d3b1c">think-cell</TabName>
            </TabContent>
          </Tab>
          <Frame $pad="23px 13px 16px 13px">
            <ExcelSheet />
          </Frame>
        </Window>
        <LinkBadge><Chain size={101} /></LinkBadge>
        <Window $place="1 / 3 / 2 / 5" $top={477}>
          <Tab $width={178} $height={49} $pad="11px 0 0 13px">
            <TabContent>
              <PowerPointLogo />
              <TabName $size={20} $line="#f26ee6, #f4845a, #dd4556">think-cell</TabName>
            </TabContent>
          </Tab>
          <Frame $pad="14px 15px 13px">
            <RibbonBar />
            <SlideView />
          </Frame>
        </Window>
      </Stage>
    </>
  );
}
